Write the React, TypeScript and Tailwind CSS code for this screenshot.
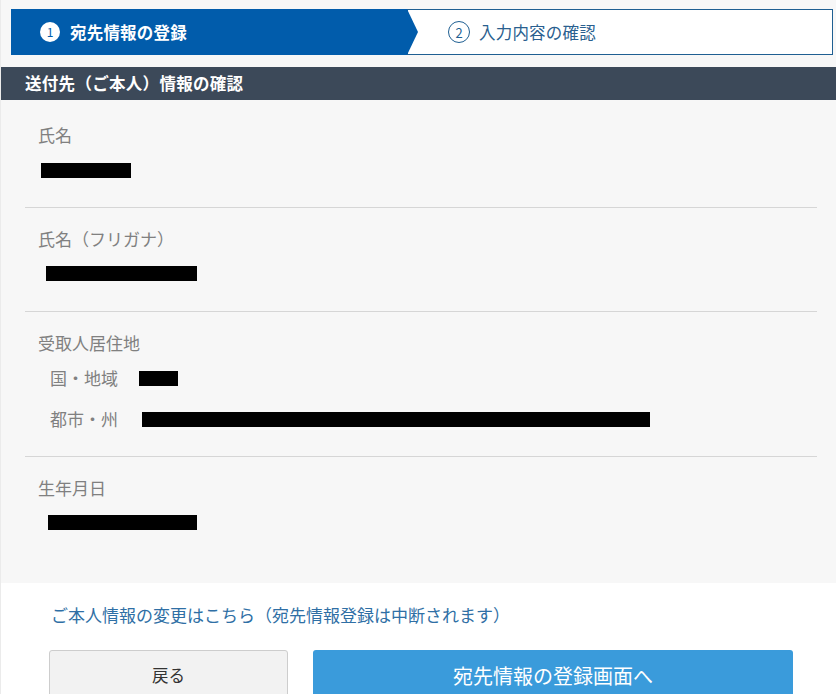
import React from "react";

const font = { fontFamily: '"Noto Sans CJK JP", "Noto Sans", sans-serif' };

function Bar({ w, ml = 0 }: { w: number; ml?: number }) {
  return (
    <span
      className="inline-block h-[15px] bg-black align-middle"
      style={{ width: w, marginLeft: ml }}
    />
  );
}

export default function App() {
  return (
    <div
      className="min-h-[694px] w-full bg-white border-l border-[#ebebeb] overflow-hidden"
      style={font}
    >
      {/* Stepper */}
      <div className="bg-[#f7f7f7] pt-[9px] pb-[12px] pl-[10px] pr-[3px]">
        <div className="flex h-[46px]">
          <div className="relative z-10 flex w-[407px] shrink-0 items-center bg-[#015cab] pl-[29px] mr-[-11px] [clip-path:polygon(0_0,calc(100%-11px)_0,100%_50%,calc(100%-11px)_100%,0_100%)]">
            <span className="flex h-[20px] w-[20px] items-center justify-center rounded-full bg-white text-[12px] leading-none text-[#015cab]">
              1
            </span>
            <span className="ml-[10px] text-[16.5px] font-bold leading-none text-white tracking-[0.2px]">
              宛先情報の登録
            </span>
          </div>
          <div className="flex flex-1 items-center border border-[#1f5f92] bg-white pl-[40px]">
            <span className="flex h-[22px] w-[22px] items-center justify-center rounded-full border-[1.5px] border-[#1f5f92] text-[13px] leading-none text-[#1f5f92]">
              2
            </span>
            <span className="ml-[9px] text-[16.5px] leading-none text-[#2a5f8f] tracking-[0.2px]">
              入力内容の確認
            </span>
          </div>
        </div>
      </div>

      {/* Section header */}
      <div className="flex h-[33px] items-center bg-[#3c4959] pl-[24px]">
        <span className="text-[16.5px] font-bold text-white leading-none tracking-[0.3px]">
          送付先（ご本人）情報の確認
        </span>
      </div>

      {/* Content */}
      <div className="bg-[#f7f7f7] pl-[24px] pr-[19px]">
        <div className="border-b border-[#d6d6d6] pl-[13px] pt-[23px] pb-[25px]">
          <div className="text-[17px] leading-[24px] text-[#808080]">氏名</div>
          <div className="mt-[11px] flex h-[24px] items-center">
            <Bar w={90} ml={3} />
          </div>
        </div>

        <div className="border-b border-[#d6d6d6] pl-[13px] pt-[19px] pb-[26px]">
          <div className="text-[17px] leading-[24px] text-[#808080]">氏名（フリガナ）</div>
          <div className="mt-[10px] flex h-[24px] items-center">
            <Bar w={151} ml={8} />
          </div>
        </div>

        <div className="border-b border-[#d6d6d6] pl-[13px] pt-[19px] pb-[25px]">
          <div className="text-[17px] leading-[24px] text-[#808080]">受取人居住地</div>
          <div className="mt-[11px] flex h-[24px] items-center pl-[12px]">
            <span className="w-[89px] text-[17px] text-[#808080]">国・地域</span>
            <Bar w={39} />
          </div>
          <div className="mt-[17px] flex h-[24px] items-center pl-[12px]">
            <span className="w-[92px] text-[17px] text-[#808080]">都市・州</span>
            <Bar w={508} />
          </div>
        </div>

        <div className="pl-[13px] pt-[19px] pb-[49px]">
          <div className="text-[17px] leading-[24px] text-[#808080]">生年月日</div>
          <div className="mt-[10px] flex h-[24px] items-center">
            <Bar w={149} ml={10} />
          </div>
        </div>
      </div>

      {/* Footer */}
      <div className="bg-white pl-[48px] pt-[20px]">
        <div className="ml-[2px] text-[17px] leading-[24px] text-[#2f6fa5]">
          ご本人情報の変更はこちら（宛先情報登録は中断されます）
        </div>
        <div className="mt-[23px] flex gap-[25px]">
          <button className="flex h-[54px] w-[239px] items-start justify-center rounded-[3px] border border-[#cdcdcd] bg-[#f2f2f2] pt-[12px] text-[16.5px] text-[#333333]">
            戻る
          </button>
          <button className="flex h-[54px] w-[480px] items-start justify-center rounded-[3px] bg-[#3a9bdb] pt-[11px] text-[20px] text-white">
            宛先情報の登録画面へ
          </button>
        </div>
      </div>
    </div>
  );
}
